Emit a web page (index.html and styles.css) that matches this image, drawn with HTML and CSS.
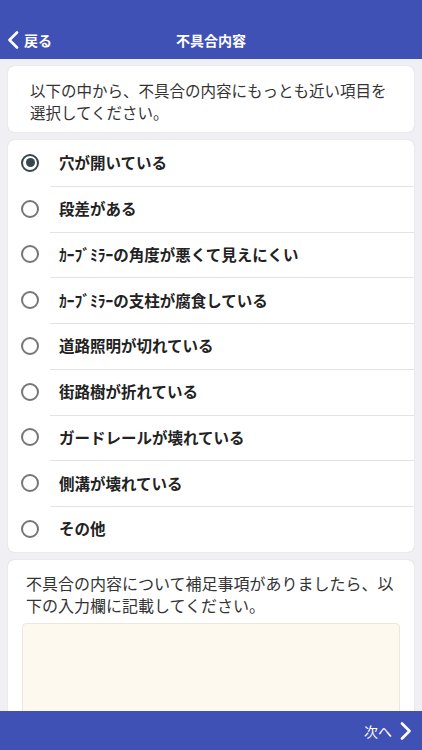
FILE: index.html
```html
<!DOCTYPE html>
<html lang="ja">
<head>
    <meta charset="UTF-8">
    <meta name="viewport" content="width=device-width, initial-scale=1.0">
    <title>不具合内容</title>
    <link rel="stylesheet" href="styles.css">
</head>
<body>
    <header class="app-header">
        <div class="status-bar"></div>
        <div class="nav-bar">
            <a href="#" class="back-btn">
                <svg class="chevron" width="12" height="18" viewBox="0 0 12 18">
                    <path d="M10 1.5 L2.5 9 L10 16.5" fill="none" stroke="#fff" stroke-width="2.6" stroke-linecap="round" stroke-linejoin="round"/>
                </svg>
                <span>戻る</span>
            </a>
            <h1 class="nav-title">不具合内容</h1>
        </div>
    </header>

    <main class="content">
        <div class="card intro">
            以下の中から、不具合の内容にもっとも近い項目を選択してください。
        </div>

        <ul class="card option-list">
            <li class="option selected"><span class="radio"></span><span class="label">穴が開いている</span></li>
            <li class="option"><span class="radio"></span><span class="label">段差がある</span></li>
            <li class="option"><span class="radio"></span><span class="label">ｶｰﾌﾞﾐﾗｰの角度が悪くて見えにくい</span></li>
            <li class="option"><span class="radio"></span><span class="label">ｶｰﾌﾞﾐﾗｰの支柱が腐食している</span></li>
            <li class="option"><span class="radio"></span><span class="label">道路照明が切れている</span></li>
            <li class="option"><span class="radio"></span><span class="label">街路樹が折れている</span></li>
            <li class="option"><span class="radio"></span><span class="label">ガードレールが壊れている</span></li>
            <li class="option"><span class="radio"></span><span class="label">側溝が壊れている</span></li>
            <li class="option"><span class="radio"></span><span class="label">その他</span></li>
        </ul>

        <div class="card note">
            <p class="note-text">不具合の内容について補足事項がありましたら、以下の入力欄に記載してください。</p>
            <textarea class="note-input"></textarea>
        </div>
    </main>

    <footer class="app-footer">
        <a href="#" class="next-btn">
            <span>次へ</span>
            <svg class="chevron" width="12" height="18" viewBox="0 0 12 18">
                <path d="M2 1.5 L9.5 9 L2 16.5" fill="none" stroke="#fff" stroke-width="2.6" stroke-linecap="round" stroke-linejoin="round"/>
            </svg>
        </a>
    </footer>
</body>
</html>
```

FILE: styles.css
```css
body {
    font-family: "Noto Sans CJK JP", "Noto Sans", sans-serif;
    background-color: #efeff4;
    margin: 0;
    color: #222;
}

.app-header {
    background-color: #3f51b5;
    color: white;
    height: 59px;
}

.status-bar {
    height: 20px;
}

.nav-bar {
    height: 39px;
    display: flex;
    align-items: center;
    justify-content: center;
    position: relative;
}

.back-btn {
    position: absolute;
    left: 7px;
    top: 0;
    bottom: 0;
    display: flex;
    align-items: center;
    gap: 5px;
    color: white;
    text-decoration: none;
    font-size: 14px;
    font-weight: 700;
}

.nav-title {
    margin: 0;
    font-size: 14px;
    font-weight: 700;
}

.content {
    padding: 7px 8px 0;
}

.card {
    background-color: white;
    border-radius: 6px;
    box-shadow: 0 0 1px rgba(0, 0, 0, 0.25);
}

.intro {
    padding: 13px 20px 9px 22px;
    font-size: 15.5px;
    line-height: 22px;
    color: #333;
}

.option-list {
    list-style: none;
    margin: 8px 0 0;
    padding: 0;
}

.option {
    height: 45.75px;
    display: flex;
    align-items: center;
    position: relative;
}

.option + .option::before {
    content: '';
    position: absolute;
    top: 0;
    left: 42px;
    right: 0;
    height: 1px;
    background-color: #e3e3e3;
}

.radio {
    width: 14px;
    height: 14px;
    border: 2px solid #767676;
    border-radius: 50%;
    margin-left: 13px;
    margin-right: 20px;
    display: flex;
    align-items: center;
    justify-content: center;
}

.option.selected .radio {
    border-color: #37474f;
}

.option.selected .radio::after {
    content: '';
    width: 9px;
    height: 9px;
    border-radius: 50%;
    background-color: #37474f;
}

.label {
    font-size: 15.5px;
    font-weight: 700;
    color: #222;
    margin-top: -1px;
}

.note {
    margin-top: 8px;
    padding: 12px 14px 8px;
}

.note-text {
    margin: 0 0 7px;
    padding-left: 4px;
    font-size: 16px;
    line-height: 22px;
    color: #333;
}

.note-input {
    display: block;
    width: 100%;
    height: 110px;
    box-sizing: border-box;
    background-color: #fdf9ee;
    border: 1px solid #ece8dc;
    border-radius: 4px;
    resize: none;
}

.app-footer {
    position: fixed;
    left: 0;
    right: 0;
    bottom: 0;
    height: 39px;
    background-color: #3f51b5;
    display: flex;
    align-items: center;
    justify-content: flex-end;
    padding-right: 10px;
}

.next-btn {
    display: flex;
    align-items: center;
    gap: 8px;
    color: white;
    text-decoration: none;
    font-size: 14px;
}
```
